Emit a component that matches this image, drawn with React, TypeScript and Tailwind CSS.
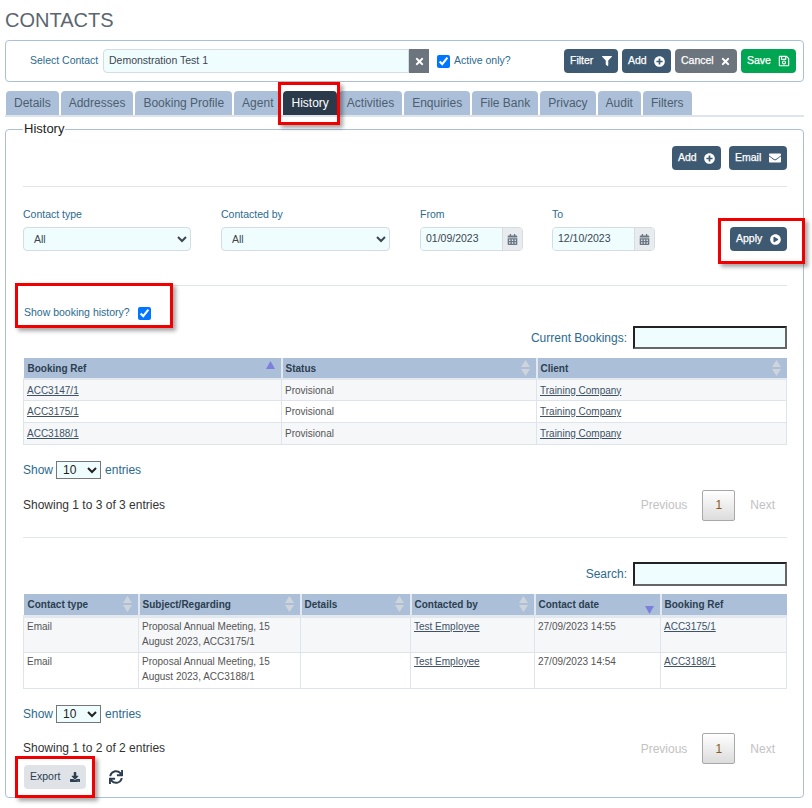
import React from 'react';
import { FaCalendarAlt, FaDownload, FaEnvelope, FaFilter, FaPlayCircle, FaPlusCircle, FaRegSave, FaSync, FaTimes } from 'react-icons/fa';

const tabs = ['Details', 'Addresses', 'Booking Profile', 'Agent', 'History', 'Activities', 'Enquiries', 'File Bank', 'Privacy', 'Audit', 'Filters'];

const SortIcon = ({ dir }: { dir?: 'asc' | 'desc' }) => {
  if (dir === 'asc') {
    return (
      <svg width="9" height="8" viewBox="0 0 9 8" className="absolute right-[6px] top-[3px]">
        <path d="M4.5 0L9 8H0z" fill="#7c7fdc" />
      </svg>
    );
  }
  if (dir === 'desc') {
    return (
      <svg width="9" height="8" viewBox="0 0 9 8" className="absolute right-[6px] top-[12px]">
        <path d="M0 0h9L4.5 8z" fill="#7c7fdc" />
      </svg>
    );
  }
  return (
    <svg width="9" height="17" viewBox="0 0 9 17" className="absolute right-[6px] top-[2px]">
      <path d="M4.5 0L9 7H0z" fill="#cfd4da" />
      <path d="M0 9h9L4.5 16z" fill="#cfd4da" />
    </svg>
  );
};

const DarkButton = ({ label, icon, className = '' }: { label: string; icon: React.ReactNode; className?: string }) => (
  <button className={`h-6 flex items-center justify-between rounded-[4px] bg-[#3e5a72] text-white text-[10.5px] [-webkit-text-stroke:0.25px_white] pl-[6px] pr-[6px] ${className}`}>
    <span>{label}</span>
    {icon}
  </button>
);

const Pager = () => (
  <div className="flex items-center text-[12px] text-[#c2c2c2]">
    <span>Previous</span>
    <span className="w-[33px] h-[31px] mx-[15px] flex items-center justify-center rounded-[2px] border border-[#a8a8a8] bg-gradient-to-b from-white to-[#dcdcdc] text-[#8a5a1c]">1</span>
    <span className="mr-[12px]">Next</span>
  </div>
);

const ShowEntries = () => (
  <div className="flex items-center text-[12px] text-[#2b6a8e] h-[18px]">
    <span>Show</span>
    <select className="w-[45px] h-[18px] ml-[3px] mr-[4px] pl-[2px] border border-[#767676] bg-[#effdff] text-[12px] text-[#222]">
      <option>10</option>
    </select>
    <span>entries</span>
  </div>
);

const Th = ({ label, dir, className = '' }: { label: string; dir?: 'asc' | 'desc'; className?: string }) => (
  <th className={`relative pl-[3px] first:pl-[4px] text-left text-[10px] font-bold text-[#2c3e50] bg-[#abc0d8] border-r-2 border-[#e2e8ee] last:border-r-0 ${className}`}>
    {label}
    <SortIcon dir={dir} />
  </th>
);

const BOOKINGS = ['ACC3147/1', 'ACC3175/1', 'ACC3188/1'];

const App = () => (
  <div className="relative w-[812px] h-[808px] bg-white font-['Liberation_Sans',Arial,sans-serif] overflow-hidden">
    <div className="pl-[5px] w-[804px]">
      <h1 className="h-[40px] pt-[9px] text-[20px] leading-[22px] text-[#5b6670]">CONTACTS</h1>

      {/* Contact selector */}
      <div className="h-[42px] flex items-center border border-[#abc0d8] rounded-[4px] pl-[24px] pr-[7px] text-[10.5px]">
        <span className="w-[73px] text-[#2b6a8e]">Select Contact</span>
        <div className="w-[306px] h-6 pl-[5px] flex items-center bg-[#effdff] border border-[#d5dce2] rounded-l-[4px] text-[#3c4650]">Demonstration Test 1</div>
        <div className="w-[20px] h-6 flex items-center justify-center bg-[#6c757d] text-white"><FaTimes size={11} /></div>
        <input type="checkbox" defaultChecked className="w-[13px] h-[13px] ml-[8px] mr-[4px]" />
        <span className="text-[#2b6a8e]">Active only?</span>
        <div className="ml-auto flex gap-[4px]">
          <DarkButton label="Filter" icon={<FaFilter size={10} />} className="w-[54px]" />
          <DarkButton label="Add" icon={<FaPlusCircle size={11} />} className="w-[49px]" />
          <button className="w-[62px] h-6 flex items-center justify-between rounded-[4px] bg-[#6c757d] text-white text-[10.5px] [-webkit-text-stroke:0.25px_white] px-[6px]">
            <span>Cancel</span><FaTimes size={11} />
          </button>
          <button className="w-[55px] h-6 flex items-center justify-between rounded-[4px] bg-[#00a651] text-white text-[10.5px] [-webkit-text-stroke:0.25px_white] px-[6px]">
            <span>Save</span><FaRegSave size={12} />
          </button>
        </div>
      </div>

      {/* Tabs */}
      <div className="flex gap-[2px] mt-[9px] pl-[1px] h-[26px] border-b-2 border-[#dee4ec]">
        {tabs.map(t => (
          <div
            key={t}
            className={t === 'History'
              ? 'h-[24px] px-[8px] flex items-center rounded-t-[4px] bg-[#2a3a4b] text-white text-[12px]'
              : 'h-[24px] px-[8px] flex items-center rounded-t-[4px] bg-[#abc0d8] text-[#4d5e70] text-[12px]'}
          >
            {t}
          </div>
        ))}
      </div>

      {/* History panel */}
      <fieldset className="mt-[5px] h-[676px] border border-[#abc0d8] rounded-[4px] pl-[17px] pr-[16px] min-w-0">
        <legend className="text-[13px] leading-[14px] text-[#222] ml-0 px-[1px]">History</legend>

        <div className="flex justify-end gap-2 mt-[10px]">
          <DarkButton label="Add" icon={<FaPlusCircle size={11} />} className="w-[49px]" />
          <DarkButton label="Email" icon={<FaEnvelope size={12} />} className="w-[58px]" />
        </div>
        <hr className="mt-[16px] border-[#e2e6ea]" />

        {/* Filters */}
        <div className="flex items-start mt-[21px] text-[10.5px] text-[#2b6a8e] h-[44px]">
          <label className="w-[198px] shrink-0 flex flex-col">
            <span className="h-[19px] leading-[13px]">Contact type</span>
            <select className="w-[168px] h-6 pl-[6px] bg-[#effdff] border border-[#d5dce2] rounded-[4px] text-[#3c4650] text-[10.5px]"><option>All</option></select>
          </label>
          <label className="w-[199px] shrink-0 flex flex-col">
            <span className="h-[19px] leading-[13px]">Contacted by</span>
            <select className="w-[169px] h-6 pl-[6px] bg-[#effdff] border border-[#d5dce2] rounded-[4px] text-[#3c4650] text-[10.5px]"><option>All</option></select>
          </label>
          {['01/09/2023', '12/10/2023'].map((d, i) => (
            <div key={d} className="w-[132px] shrink-0 flex flex-col">
              <span className="h-[19px] leading-[13px]">{i === 0 ? 'From' : 'To'}</span>
              <div className="w-[103px] h-6 flex border border-[#d5dce2] rounded-[4px] overflow-hidden">
                <span className="flex-1 pl-[5px] leading-[21px] bg-[#effdff] text-[#3c4650]">{d}</span>
                <span className="w-[20px] flex items-center justify-center bg-[#e9ecef] border-l border-[#d5dce2] text-[#6b7785]"><FaCalendarAlt size={11} /></span>
              </div>
            </div>
          ))}
          <DarkButton label="Apply" icon={<FaPlayCircle size={11} />} className="w-[57px] mt-[19px] ml-auto" />
        </div>
        <hr className="mt-[33px] border-[#e2e6ea]" />

        <div className="flex items-center mt-[20px] pl-[1px] h-[14px] text-[10.5px] text-[#2b6a8e]">
          <span>Show booking history?</span>
          <input type="checkbox" defaultChecked className="w-[13px] h-[13px] ml-[8px]" />
        </div>

        <div className="flex items-center justify-end h-[23px] mt-[6px] text-[12px] text-[#2b6a8e]">
          <span className="mr-[6px]">Current Bookings:</span>
          <input className="w-[154px] h-[23px] bg-[#effdff] border-2 border-t-[#222] border-l-[#222] border-r-[#666] border-b-[#666]" />
        </div>

        {/* Bookings table */}
        <table className="mt-[9px] w-[764px] table-fixed border-collapse text-[10px] text-[#555]">
          <thead>
            <tr className="border-b-2 border-[#e2e8ee]">
              <Th label="Booking Ref" dir="asc" className="w-[258px] h-[21px]" />
              <Th label="Status" className="w-[255px] h-[21px]" />
              <Th label="Client" className="h-[21px]" />
            </tr>
          </thead>
          <tbody>
            {BOOKINGS.map((b, i) => (
              <tr key={b} className={i === 0 ? 'h-[21px] bg-[#f5f7f9]' : i === 1 ? 'h-[22px] bg-white' : 'h-[22px] bg-[#f5f7f9]'}>
                <td className="px-[3px] pt-[1px] border border-[#dee4ec]"><a className="underline text-[#3d5266]">{b}</a></td>
                <td className="px-[3px] pt-[1px] border border-[#dee4ec]">Provisional</td>
                <td className="px-[3px] pt-[1px] border border-[#dee4ec]"><a className="underline text-[#3d5266]">Training Company</a></td>
              </tr>
            ))}
          </tbody>
        </table>

        <div className="mt-[16px]"><ShowEntries /></div>
        <div className="flex items-center justify-between mt-[11px] h-[31px] text-[12px] text-[#333]">
          <span>Showing 1 to 3 of 3 entries</span>
          <Pager />
        </div>
        <hr className="mt-[16px] border-[#e2e6ea]" />

        <div className="flex items-center justify-end h-[24px] mt-[24px] text-[12px] text-[#2b6a8e]">
          <span className="mr-[6px]">Search:</span>
          <input className="w-[154px] h-[24px] bg-[#effdff] border-2 border-t-[#222] border-l-[#222] border-r-[#666] border-b-[#666]" />
        </div>

        {/* Contact history table */}
        <table className="mt-[8px] w-[764px] table-fixed border-collapse text-[10px] text-[#555]">
          <thead>
            <tr className="border-b-[3px] border-[#e2e8ee]">
              <Th label="Contact type" className="w-[115px] h-[23px]" />
              <Th label="Subject/Regarding" className="w-[162px] h-[23px]" />
              <Th label="Details" className="w-[110px] h-[23px]" />
              <Th label="Contacted by" className="w-[124px] h-[23px]" />
              <Th label="Contact date" dir="desc" className="w-[126px] h-[23px]" />
              <th className="h-[23px] px-[3px] text-left text-[10px] font-bold text-[#2c3e50] bg-[#abc0d8]">Booking Ref</th>
            </tr>
          </thead>
          <tbody>
            {[
              { ref: 'ACC3175/1', at: '27/09/2023 14:55' },
              { ref: 'ACC3188/1', at: '27/09/2023 14:54' },
            ].map((r, i) => (
              <tr key={r.ref} className={i === 0 ? 'h-[36px] bg-[#f5f7f9]' : 'h-[36px] bg-white'}>
                <td className="px-[3px] pt-[1px] align-top leading-[15px] border border-[#dee4ec]">Email</td>
                <td className="px-[3px] pt-[1px] align-top leading-[15px] border border-[#dee4ec]">{`Proposal Annual Meeting, 15 August 2023, ${r.ref}`}</td>
                <td className="border border-[#dee4ec]"></td>
                <td className="px-[3px] pt-[1px] align-top leading-[15px] border border-[#dee4ec]"><a className="underline text-[#3d5266]">Test Employee</a></td>
                <td className="px-[3px] pt-[1px] align-top leading-[15px] border border-[#dee4ec]">{r.at}</td>
                <td className="px-[3px] pt-[1px] align-top leading-[15px] border border-[#dee4ec]"><a className="underline text-[#3d5266]">{r.ref}</a></td>
              </tr>
            ))}
          </tbody>
        </table>

        <div className="mt-[16px]"><ShowEntries /></div>
        <div className="flex items-start justify-between mt-[10px] h-[31px] text-[12px] text-[#333]">
          <span className="mt-[6px]">Showing 1 to 2 of 2 entries</span>
          <Pager />
        </div>
        <div className="flex items-center mt-[1px]">
          <button className="w-[62px] h-6 ml-[1px] flex items-center justify-between px-[6px] rounded-[4px] bg-[#dfe3e8] text-[10.5px] text-[#2c3e50]">
            <span>Export</span><FaDownload size={10} />
          </button>
          <FaSync size={14} className="ml-[23px] text-[#2c3e50]" />
        </div>
      </fieldset>
    </div>

    {/* Red annotation boxes from the screenshot */}
    <div className="absolute left-[278px] top-[82px] w-[62px] h-[43px] border-[3px] border-[#f00000] shadow-[3px_3px_4px_rgba(0,0,0,0.35)] pointer-events-none" />
    <div className="absolute left-[718px] top-[218px] w-[87px] h-[46px] border-[3px] border-[#f00000] shadow-[3px_3px_4px_rgba(0,0,0,0.35)] pointer-events-none" />
    <div className="absolute left-[15px] top-[283px] w-[158px] h-[45px] border-[3px] border-[#f00000] shadow-[3px_3px_4px_rgba(0,0,0,0.35)] pointer-events-none" />
    <div className="absolute left-[15px] top-[756px] w-[80px] h-[42px] border-[3px] border-[#f00000] shadow-[3px_3px_4px_rgba(0,0,0,0.35)] pointer-events-none" />
  </div>
);

export default App;
